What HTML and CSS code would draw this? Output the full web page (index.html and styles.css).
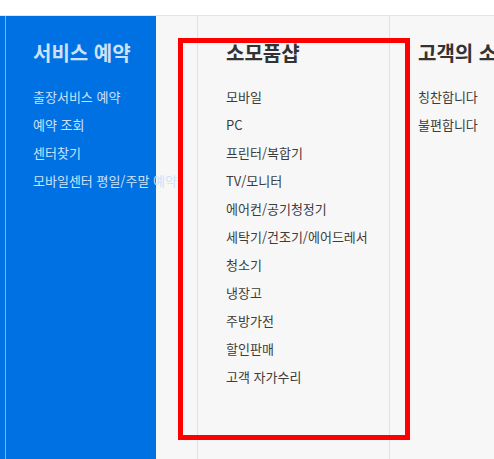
FILE: index.html
```html
<!DOCTYPE html>
<html lang="ko">
<head>
<meta charset="utf-8">
<link rel="stylesheet" href="styles.css">
</head>
<body>
<div class="menu">
  <div class="blue">
    <div class="blue-inner">
      <h2 class="title light">서비스 예약</h2>
      <ul class="list light">
        <li>출장서비스 예약</li>
        <li>예약 조회</li>
        <li>센터찾기</li>
        <li>모바일센터 평일/주말 예약</li>
      </ul>
    </div>
  </div>
  <div class="spacer"></div>
  <div class="col">
    <h2 class="title">소모품샵</h2>
    <ul class="list">
      <li>모바일</li>
      <li>PC</li>
      <li>프린터/복합기</li>
      <li>TV/모니터</li>
      <li>에어컨/공기청정기</li>
      <li>세탁기/건조기/에어드레서</li>
      <li>청소기</li>
      <li>냉장고</li>
      <li>주방가전</li>
      <li>할인판매</li>
      <li>고객 자가수리</li>
    </ul>
  </div>
  <div class="col last">
    <h2 class="title">고객의 소리</h2>
    <ul class="list">
      <li>칭찬합니다</li>
      <li>불편합니다</li>
    </ul>
  </div>
  <div class="highlight"></div>
</div>
</body>
</html>
```

FILE: styles.css
```css
html, body {
  margin: 0;
  padding: 0;
  background: #ffffff;
  overflow: hidden;
}
body {
  padding-top: 15px;
  font-family: "Noto Sans CJK KR", "Noto Sans", sans-serif;
}
.menu {
  position: relative;
  display: flex;
  height: 443px;
  border-top: 1px solid #e4e4e4;
  background: #f7f7f7;
  overflow: hidden;
}
.blue {
  flex: 0 0 156px;
  width: 156px;
  min-width: 0;
  background: #0071e3;
  padding-left: 5px;
  box-sizing: border-box;
}
.blue-inner {
  height: 100%;
  border-left: 1px solid #7fb3ef;
  padding-left: 27px;
  padding-top: 25px;
  box-sizing: border-box;
  white-space: nowrap;
}
.spacer {
  flex: 0 0 41px;
}
.col {
  flex: 0 0 192px;
  min-width: 0;
  border-left: 1px solid #e2e2e2;
  padding-left: 28px;
  padding-top: 25px;
  box-sizing: border-box;
  white-space: nowrap;
}
.col.last {
  flex: 1 0 auto;
}
.title {
  margin: 0 0 18px;
  font-size: 20px;
  line-height: 24px;
  font-weight: 700;
  color: #333333;
}
.list {
  list-style: none;
  margin: 0;
  padding: 0;
  font-size: 13px;
  line-height: 28px;
  color: #3c3c3c;
}
.light {
  color: #cde1f8;
}
.highlight {
  position: absolute;
  left: 178px;
  top: 22px;
  width: 232px;
  height: 402px;
  border: 5px solid #ff0000;
  box-sizing: border-box;
}
```
